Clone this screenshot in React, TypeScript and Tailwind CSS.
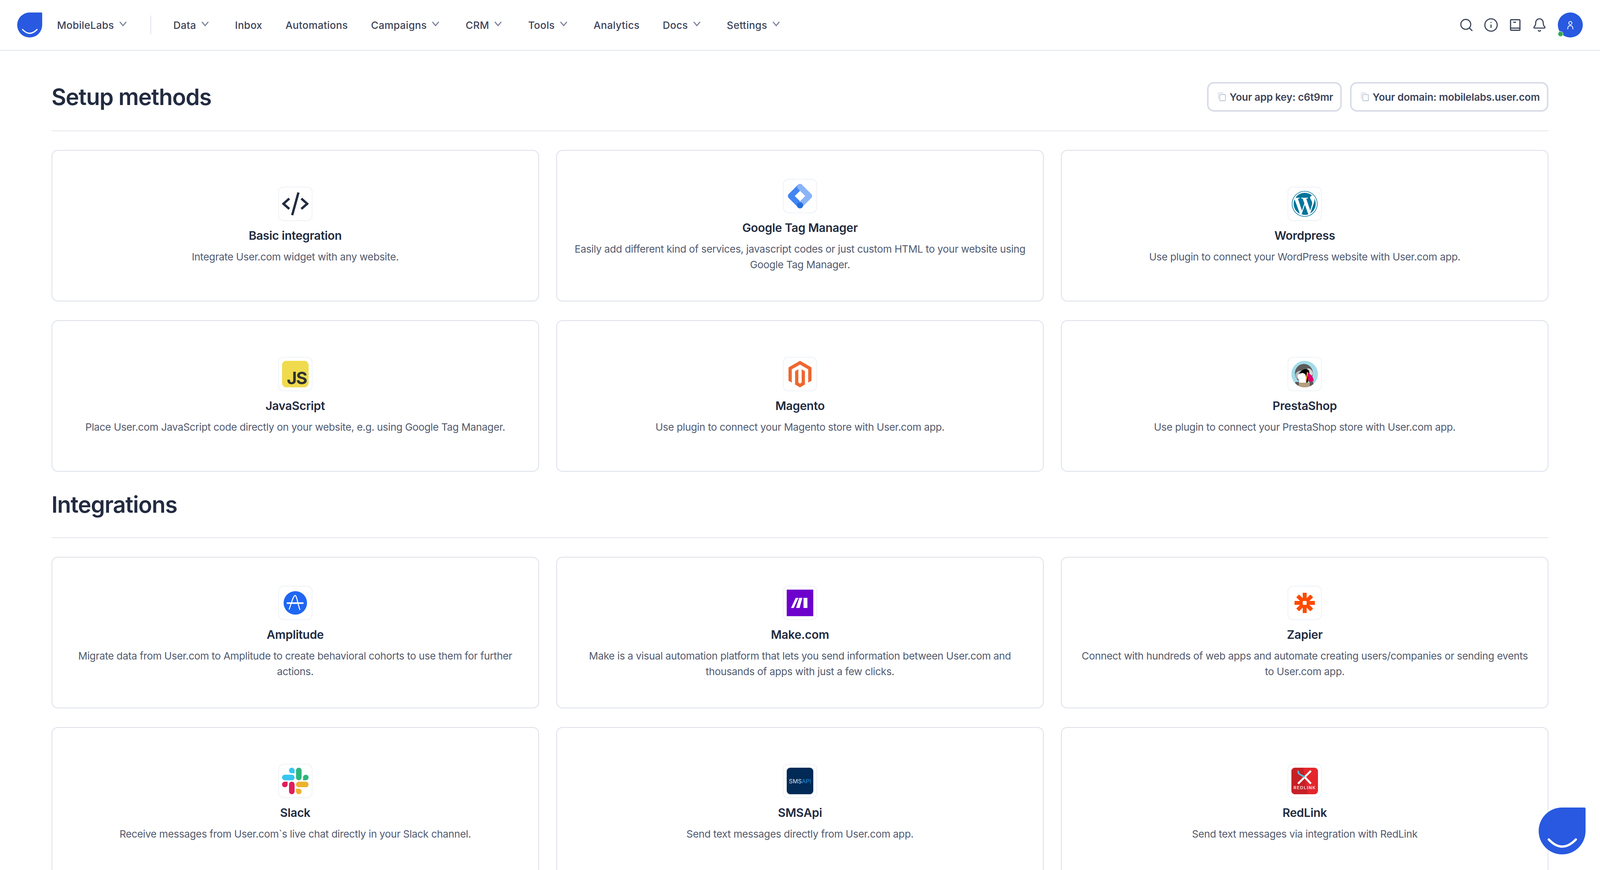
import { Bell, Info, Search } from "lucide-react";
import type { ReactNode } from "react";
import { FaMagento, FaWordpress } from "react-icons/fa";

// The window comes out 4096 wide rather than 4480, so horizontal spacing is in vw to stay proportional.

const navItems = [
  { label: "Data", menu: true },
  { label: "Inbox", menu: false },
  { label: "Automations", menu: false },
  { label: "Campaigns", menu: true },
  { label: "CRM", menu: true },
  { label: "Tools", menu: true },
  { label: "Analytics", menu: false },
  { label: "Docs", menu: true },
  { label: "Settings", menu: true },
];

function Chevron() {
  return (
    <svg viewBox="0 0 22 14" className="ml-[0.3125vw] mr-[0.18vw] mb-[6px] w-[20px] h-[14px]" fill="none" preserveAspectRatio="none">
      <path d="M2 2l9 9.5L20 2" stroke="#7b839a" strokeWidth="3" />
    </svg>
  );
}

function Drop({ className }: { className: string }) {
  return (
    <svg viewBox="0 0 120 120" className={className}>
      <path d="M60 0H117a3 3 0 0 1 3 3V60A60 60 0 1 1 60 0Z" fill="#2859e0" />
      <path d="M26 82Q60 118 95 82" fill="none" stroke="#fff" strokeWidth="6" strokeLinecap="round" />
    </svg>
  );
}

function CopyIcon() {
  return (
    <svg viewBox="0 0 22 22" className="w-[20px] h-[22px] shrink-0" fill="none" preserveAspectRatio="none">
      <path d="M1 16V3a2 2 0 0 1 2-2h12" stroke="#d5d9e2" strokeWidth="2" />
      <rect x="5" y="5" width="16" height="16" rx="2.5" stroke="#bcc2cf" strokeWidth="2" />
    </svg>
  );
}

function CodeLogo() {
  return (
    <svg viewBox="0 0 68 68" className="w-[68px] h-[68px]" fill="none" stroke="#222b40" strokeWidth="6">
      <path d="M18.6 20.5L3.5 33.8l15.1 13.3" />
      <path d="M49.4 20.5l15.1 13.3-15.1 13.3" />
      <path d="M42 5L26 63" />
    </svg>
  );
}

function TagManagerLogo() {
  return (
    <svg viewBox="0 0 68 68" className="w-[68px] h-[68px]" fill="none" strokeWidth="14.5" strokeLinecap="round" strokeLinejoin="round">
      <path d="M34 10.25L10.25 34 34 57.75" stroke="#4285f4" />
      <path d="M34 10.25L57.75 34 34 57.75" stroke="#8ab4f8" />
      <circle cx="34" cy="57.75" r="8" fill="#246fdb" stroke="none" />
    </svg>
  );
}

function JsLogo() {
  return (
    <div className="w-[68px] h-[68px] rounded-[11px] bg-[#f0db4f] flex items-end justify-end pr-[5px]">
      <span className="font-bold text-[44px] leading-[48px] tracking-[-2px] text-[#323330]">JS</span>
    </div>
  );
}

function PrestaLogo() {
  return (
    <svg viewBox="0 0 68 68" className="w-[68px] h-[68px]">
      <clipPath id="presta-clip">
        <circle cx="34" cy="34" r="34" />
      </clipPath>
      <g clipPath="url(#presta-clip)">
        <rect width="68" height="68" fill="#a5dce9" />
        <ellipse cx="32" cy="32" rx="23" ry="24" fill="#5b5b5b" />
        <path d="M10 34c4-8 12-10 20-9l2 18-18 3c-3-4-4-8-4-12z" fill="#b5b7bb" />
        <path d="M40 20c7-2 13 3 15 12l-2 6-9-4z" fill="#dad6d2" />
        <path d="M20 32c6-10 18-14 24-8 3 5 2 10-1 14l-2 20H22c4-8 2-16-2-26z" fill="#000" />
        <path d="M16 36c6-4 12-6 18-4 4 6 5 16 4 25l-17 0c-1-7-6-14-5-21z" fill="#fff" />
        <path d="M41 31l3 0c8 6 13 13 13 20-2 3-8 4-12 3-2-7-4-15-4-23z" fill="#df0067" />
        <path d="M40 28l3 2-5 24-2-1z" fill="#f6a71d" />
        <ellipse cx="34" cy="30" rx="3" ry="3.5" fill="#000" />
        <rect x="16" y="56" width="34" height="12" fill="#b59e7d" />
        <rect x="10" y="54" width="9" height="14" fill="#5b5b5b" />
        <rect x="47" y="54" width="9" height="14" fill="#5b5b5b" />
      </g>
    </svg>
  );
}

function AmplitudeLogo() {
  return (
    <svg viewBox="0 0 60 60" className="w-[60px] h-[60px]" fill="none">
      <circle cx="30" cy="30" r="30" fill="#1f66f2" />
      <path d="M8 30.5H51" stroke="#fff" strokeWidth="4" />
      <path d="M14 47C20 30 25 11 29.5 11C34 11 36 33 42 48" stroke="#fff" strokeWidth="2.5" />
    </svg>
  );
}

function MakeLogo() {
  return (
    <svg viewBox="0 0 68 68" className="w-[68px] h-[68px]">
      <rect width="68" height="68" fill="#6d00cc" />
      <path d="M11 47h7l12-26h-7zM24 47h9l7-26h-8zM43 21h10v26H43z" fill="#fff" />
    </svg>
  );
}

function ZapierLogo() {
  return (
    <svg viewBox="0 0 68 68" className="w-[68px] h-[68px]" fill="none">
      <g stroke="#ff4a00" strokeWidth="10">
        <path d="M34 8V60" />
        <path d="M8 34H60" />
        <path d="M16 16L52 52" />
        <path d="M52 16L16 52" />
      </g>
      <rect x="29" y="29" width="10" height="10" rx="2" fill="#fff" />
    </svg>
  );
}

function SlackLogo() {
  return (
    <svg viewBox="0 0 122.8 122.8" className="w-[68px] h-[68px]">
      <path d="M25.8 77.6c0 7.1-5.8 12.9-12.9 12.9S0 84.7 0 77.6s5.8-12.9 12.9-12.9h12.9v12.9zm6.5 0c0-7.1 5.8-12.9 12.9-12.9s12.9 5.8 12.9 12.9v32.3c0 7.1-5.8 12.9-12.9 12.9s-12.9-5.8-12.9-12.9V77.6z" fill="#e01e5a" />
      <path d="M45.2 25.8c-7.1 0-12.9-5.8-12.9-12.9S38.1 0 45.2 0s12.9 5.8 12.9 12.9v12.9H45.2zm0 6.5c7.1 0 12.9 5.8 12.9 12.9s-5.8 12.9-12.9 12.9H12.9C5.8 58.1 0 52.3 0 45.2s5.8-12.9 12.9-12.9h32.3z" fill="#36c5f0" />
      <path d="M97 45.2c0-7.1 5.8-12.9 12.9-12.9s12.9 5.8 12.9 12.9-5.8 12.9-12.9 12.9H97V45.2zm-6.5 0c0 7.1-5.8 12.9-12.9 12.9s-12.9-5.8-12.9-12.9V12.9C64.7 5.8 70.5 0 77.6 0s12.9 5.8 12.9 12.9v32.3z" fill="#2eb67d" />
      <path d="M77.6 97c7.1 0 12.9 5.8 12.9 12.9s-5.8 12.9-12.9 12.9-12.9-5.8-12.9-12.9V97h12.9zm0-6.5c-7.1 0-12.9-5.8-12.9-12.9s5.8-12.9 12.9-12.9h32.3c7.1 0 12.9 5.8 12.9 12.9s-5.8 12.9-12.9 12.9H77.6z" fill="#ecb22e" />
    </svg>
  );
}

function SmsApiLogo() {
  return (
    <div className="w-[68px] h-[68px] rounded-[9px] bg-[#012a57] flex items-center justify-center text-[15px] leading-none">
      <span className="text-[#d9e2ec]">SMS</span>
      <span className="text-[#1c8ad6]">API</span>
    </div>
  );
}

function RedLinkLogo() {
  return (
    <div className="relative w-[68px] h-[68px] rounded-[9px] bg-[#e4262c] overflow-hidden flex flex-col items-center justify-end pb-[11px]">
      <svg viewBox="0 0 68 68" className="absolute inset-0 w-[68px] h-[68px]" fill="none">
        <path d="M0 0H30L42 68H0Z" fill="#c62027" />
        <path d="M34 24L50 8M34 24L17 41M34 24L50 41" stroke="#fff" strokeWidth="5" />
        <path d="M18 8C14 16 28 20 34 24" stroke="#4ec3e0" strokeWidth="4" />
      </svg>
      <span className="relative text-[11px] leading-none tracking-[1.5px] text-white font-medium">REDLINK</span>
    </div>
  );
}

type Method = { title: string; text: string; logo: ReactNode };

const setupMethods: Method[] = [
  { title: "Basic integration", text: "Integrate User.com widget with any website.", logo: <CodeLogo /> },
  { title: "Google Tag Manager", text: "Easily add different kind of services, javascript codes or just custom HTML to your website using\nGoogle Tag Manager.", logo: <TagManagerLogo /> },
  { title: "Wordpress", text: "Use plugin to connect your WordPress website with User.com app.", logo: <FaWordpress className="w-[68px] h-[68px] text-[#00749a]" /> },
  { title: "JavaScript", text: "Place User.com JavaScript code directly on your website, e.g. using Google Tag Manager.", logo: <JsLogo /> },
  { title: "Magento", text: "Use plugin to connect your Magento store with User.com app.", logo: <FaMagento className="w-[68px] h-[68px] text-[#ee672f]" /> },
  { title: "PrestaShop", text: "Use plugin to connect your PrestaShop store with User.com app.", logo: <PrestaLogo /> },
];

const integrations: Method[] = [
  { title: "Amplitude", text: "Migrate data from User.com to Amplitude to create behavioral cohorts to use them for further\nactions.", logo: <AmplitudeLogo /> },
  { title: "Make.com", text: "Make is a visual automation platform that lets you send information between User.com and\nthousands of apps with just a few clicks.", logo: <MakeLogo /> },
  { title: "Zapier", text: "Connect with hundreds of web apps and automate creating users/companies or sending events\nto User.com app.", logo: <ZapierLogo /> },
  { title: "Slack", text: "Receive messages from User.com`s live chat directly in your Slack channel.", logo: <SlackLogo /> },
  { title: "SMSApi", text: "Send text messages directly from User.com app.", logo: <SmsApiLogo /> },
  { title: "RedLink", text: "Send text messages via integration with RedLink", logo: <RedLinkLogo /> },
];

function MethodCard({ item }: { item: Method }) {
  return (
    <div className="h-[388px] rounded-[16px] border-2 border-[#dcdfe9] px-[0.9vw] flex flex-col items-center justify-center text-center">
      <div className="w-[88px] h-[88px] rounded-[14px] border-2 border-[#eef2f7] flex items-center justify-center">
        {item.logo}
      </div>
      <h3 className="mt-[17px] text-[30px] leading-[40px] font-semibold tracking-[-0.3px] text-[#222b40]">{item.title}</h3>
      <p className="mt-[15px] text-[26px] leading-[40px] tracking-[-0.35px] whitespace-pre-line text-[#525a6e]">{item.text}</p>
    </div>
  );
}

function CopyButton({ label }: { label: string }) {
  return (
    <button className="h-[76px] rounded-[18px] border-[4px] border-[#d9dce8] pl-[0.58vw] pr-[0.45vw] flex items-center gap-[0.25vw] text-[26px] font-semibold tracking-[-0.2px] text-[#3d4459]">
      <CopyIcon />
      {label}
    </button>
  );
}

export default function App() {
  return (
    <div className="relative h-screen overflow-hidden bg-white font-['Inter',sans-serif]">
      <header className="h-[130px] border-b-2 border-[#dfe3ea] px-[1.0714vw] flex items-center">
        <Drop className="w-[64px] h-[64px]" />
        <div className="ml-[0.93vw] flex items-center text-[26px] font-medium tracking-[0.25px] text-[#3d4459]">
          MobileLabs
          <Chevron />
        </div>
        <div className="ml-[1.29vw] mr-[1.39vw] w-[2px] h-[48px] bg-[#dfe3ea]" />
        <nav className="flex items-center gap-[1.45vw] text-[26px] font-medium tracking-[0.25px] text-[#3d4459]">
          {navItems.map((item) => (
            <div key={item.label} className="flex items-center">
              {item.label}
              {item.menu && <Chevron />}
            </div>
          ))}
        </nav>
        <div className="ml-auto flex items-center gap-[0.59vw] text-[#3d4459]">
          <Search className="w-[38px] h-[38px]" strokeWidth={1.8} />
          <Info className="w-[38px] h-[38px]" strokeWidth={1.8} />
          <svg viewBox="0 0 38 38" className="w-[38px] h-[38px]" fill="none" stroke="currentColor" strokeWidth="3">
            <rect x="7" y="5.5" width="24" height="27" rx="2" />
            <path d="M7 27H31" />
            <path d="M14 12H21" />
          </svg>
          <Bell className="w-[38px] h-[38px]" strokeWidth={1.8} />
          <div className="relative ml-[0.1vw] w-[64px] h-[64px] rounded-full bg-[#2859e0] flex items-center justify-center">
            <svg viewBox="0 0 32 32" className="w-[32px] h-[32px]" fill="none" stroke="#fff" strokeWidth="2">
              <circle cx="16" cy="11" r="4" />
              <path d="M9.5 27v-3a6.5 6.5 0 0 1 13 0v3" />
            </svg>
            <span className="absolute left-0 bottom-[2px] w-[14px] h-[14px] rounded-full bg-[#34a853] border border-white" />
          </div>
        </div>
      </header>

      <main className="px-[3.214vw]">
        <div className="pt-[80px] pb-[48px] border-b-2 border-[#e3e6ec] flex items-center justify-between">
          <h1 className="text-[58px] leading-[76px] font-semibold tracking-[-1.2px] text-[#222b40]">Setup methods</h1>
          <div className="flex items-center gap-[0.5vw]">
            <CopyButton label="Your app key: c6t9mr" />
            <CopyButton label="Your domain: mobilelabs.user.com" />
          </div>
        </div>
        <div className="mt-[48px] grid grid-cols-3 gap-y-[48px] gap-x-[1.0714vw]">
          {setupMethods.map((item) => (
            <MethodCard key={item.title} item={item} />
          ))}
        </div>

        <div className="mt-[48px] pb-[48px] border-b-2 border-[#e3e6ec]">
          <h2 className="text-[58px] leading-[72px] font-semibold tracking-[-1.2px] text-[#222b40]">Integrations</h2>
        </div>
        <div className="mt-[48px] grid grid-cols-3 gap-y-[48px] gap-x-[1.0714vw]">
          {integrations.map((item) => (
            <MethodCard key={item.title} item={item} />
          ))}
        </div>
      </main>

      <Drop className="absolute right-[0.893vw] bottom-[40px] w-[120px] h-[120px]" />
    </div>
  );
}
